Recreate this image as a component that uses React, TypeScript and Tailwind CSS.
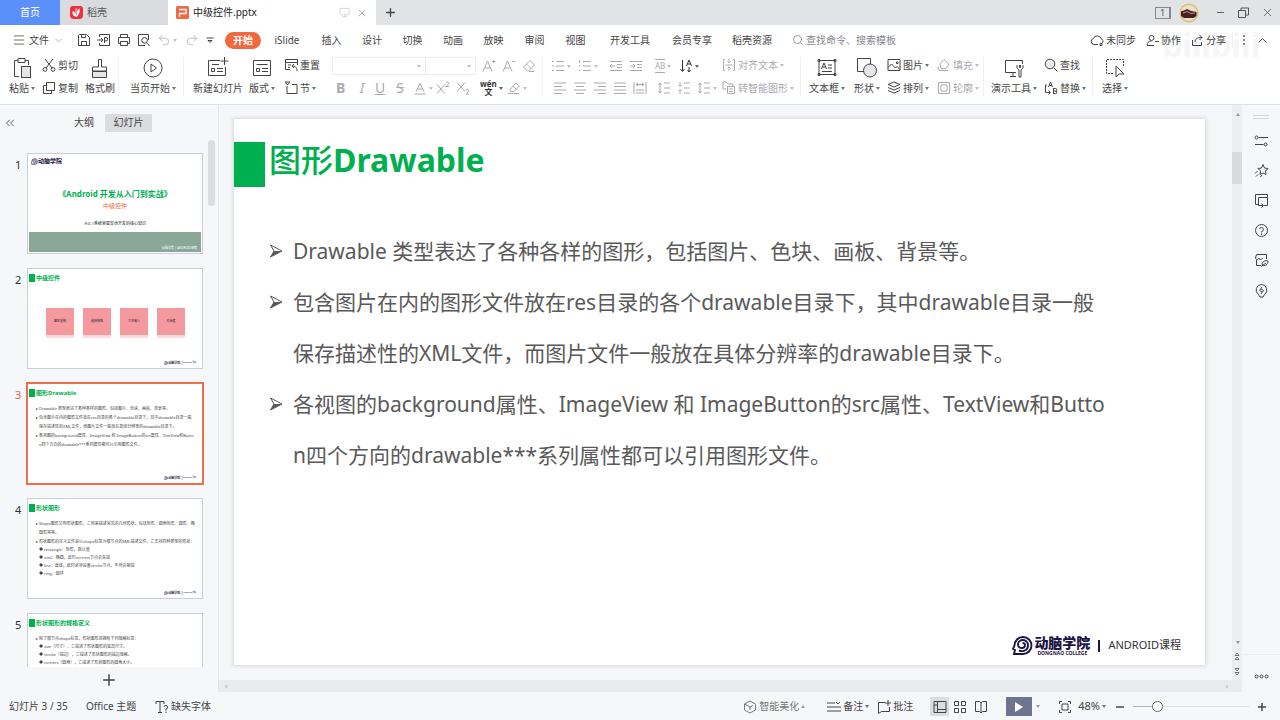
import type { ReactNode } from 'react';
import { ChevronDown, ChevronUp, ChevronsLeft, Menu, Minus, Monitor, Plus, Search, Undo2, Redo2, X } from 'lucide-react';

interface IconProps {
  d: string;
  size?: number;
  className?: string;
  fill?: string;
  children?: ReactNode;
}

/**
 * 线条图标，画布大小与显示大小一致
 */
function Icon({ d, size = 16, className = '', fill = 'none', children }: IconProps) {
  return (
    <svg
      width={size}
      height={size}
      viewBox={`0 0 ${size} ${size}`}
      fill={fill}
      stroke="currentColor"
      strokeWidth="1"
      className={`shrink-0 ${className}`}
      aria-hidden="true"
    >
      {children}
      <path d={d} />
    </svg>
  );
}

/**
 * 下拉小三角
 */
function Caret({ up = false }: { up?: boolean }) {
  return (
    <svg width="4" height="3" viewBox="0 0 4 3" className="ml-0.5 shrink-0 opacity-75" aria-hidden="true">
      <path d={up ? 'M0 3h4L2 0z' : 'M0 0h4L2 3z'} fill="currentColor" />
    </svg>
  );
}

interface ToolProps {
  label: string;
  className?: string;
  caret?: boolean;
  caretUp?: boolean;
  children: ReactNode;
}

/**
 * 大按钮：图标在上，文字在下
 */
function BigTool({ label, className = '', caret, children }: ToolProps) {
  return (
    <button className={`flex shrink-0 flex-col items-center justify-between ${className}`}>
      {children}
      <span className="flex items-center whitespace-nowrap leading-4">
        {label}
        {caret && <Caret />}
      </span>
    </button>
  );
}

/**
 * 小按钮：图标在左，文字在右
 */
function SmallTool({ label, className = '', caret, caretUp, children }: ToolProps) {
  return (
    <button className={`flex h-4 shrink-0 items-center gap-0.5 whitespace-nowrap ${className}`}>
      {children}
      <span className="flex items-center">
        {label}
        {caret && <Caret up={caretUp} />}
      </span>
    </button>
  );
}

/**
 * 只有图标的按钮
 */
function IconTool({ label, className = 'w-5', caret, children }: ToolProps) {
  return (
    <button aria-label={label} className={`flex h-4 shrink-0 items-center ${className}`}>
      {children}
      {caret && <Caret />}
    </button>
  );
}

function Divider({ className = 'h-10' }: { className?: string }) {
  return <div className={`w-px shrink-0 bg-[#f0f0f3] ${className}`} />;
}

const menus = [
  { name: 'iSlide', width: 'w-12' },
  { name: '插入', width: 'w-[41px]' },
  { name: '设计', width: 'w-10' },
  { name: '切换', width: 'w-[41px]' },
  { name: '动画', width: 'w-10' },
  { name: '放映', width: 'w-[41px]' },
  { name: '审阅', width: 'w-[41px]' },
  { name: '视图', width: 'w-[41px]' },
  { name: '开发工具', width: 'w-17' },
  { name: '会员专享', width: 'w-14' },
  { name: '稻壳资源', width: 'w-16' },
];

function TitleBar() {
  return (
    <header className="flex h-[25px] shrink-0 items-center bg-[#e2e3e5]">
      <button className="h-full w-15 bg-[#5b8ff9] text-white">首页</button>
      <button className="flex h-full w-[108px] items-center gap-1 bg-[#dadbdf] pl-[10px] text-[#555]">
        <svg width="13" height="13" viewBox="0 0 14 14" aria-hidden="true">
          <path d="M2 0h10l2 2v8a4 4 0 0 1-4 4H4a4 4 0 0 1-4-4V2z" fill="#ee2f3d" />
          <path d="M7 12C3 11 2 8 3 5.500c2 1 3 2.500 4 4.500C7 7 8 4 10 2.500c1 3 .5 6-3 9.500z" fill="#fff" />
          <path d="M6.500 2.500v5" stroke="#fff" />
        </svg>
        稻壳
      </button>
      <div className="flex h-full w-52 items-center bg-white pl-2 text-[#222]">
        <svg width="13" height="13" viewBox="0 0 13 13" className="mr-1" aria-hidden="true">
          <rect width="13" height="13" rx="1.500" fill="#ee6a43" />
          <path d="M3 3.500h7v4H3.500V11" fill="none" stroke="#fff" strokeWidth="1.300" />
        </svg>
        <span className="flex-1 whitespace-nowrap">中级控件.pptx</span>
        <Monitor size={11} strokeWidth={1.5} className="text-[#c4c5c8]" />
        <button aria-label="关闭标签" className="mr-2 ml-1.5">
          <X size={12} strokeWidth={1.5} className="text-[#999]" />
        </button>
      </div>
      <button aria-label="新建标签" className="ml-2">
        <Plus size={13} strokeWidth={2.5} className="text-[#444]" />
      </button>
      <div className="ml-auto flex items-center text-[#555]">
        <span className="flex h-3 w-4 items-center justify-center border border-r-2 border-[#7e8a97] text-[9px] leading-3">1</span>
        <svg width="20" height="20" viewBox="0 0 20 20" className="ml-2" aria-hidden="true">
          <circle cx="10" cy="10" r="9.500" fill="#d9bd7a" />
          <circle cx="10" cy="10" r="8" fill="#eadfcb" />
          <path d="M2 8.500l4-1.500 2-1 4 2 5.500 1v4l-3 2H5l-3-2z" fill="#4a1c22" />
          <path d="M4 10l4-1.500 4 2 4-.5" stroke="#b89b8a" fill="none" />
        </svg>
        <button aria-label="最小化" className="ml-4">
          <Minus size={11} strokeWidth={2} />
        </button>
        <button aria-label="还原" className="ml-3">
          <Icon size={11} d="M.5 3.500h7v7h-7zM3 3.500V1h7.500v7h-3" />
        </button>
        <button aria-label="关闭" className="mr-1.5 ml-3">
          <X size={13} strokeWidth={1.5} />
        </button>
      </div>
    </header>
  );
}

function MenuBar() {
  return (
    <nav className="relative flex h-[30px] shrink-0 items-center bg-white text-[#444]">
      <span className="absolute top-1 right-5 text-[32px] leading-8 font-bold text-[#f6f6f8]" aria-hidden="true">bilibili</span>
      <button className="relative flex w-[72px] items-center pl-3">
        <Menu size={14} strokeWidth={1.3} />
        <span className="ml-[3px]">文件</span>
        <ChevronDown size={11} strokeWidth={1.3} className="ml-1 text-[#888]" />
      </button>
      <Divider className="h-4" />
      <div className="flex items-center gap-1 pl-1">
        <IconTool label="保存" className="w-4">
          <Icon size={14} d="M1.500 12.500v-10l1-1h7l3 3v8zM4.500 1.500v3h4v-2M4.500 12.500v-4h5v4" />
        </IconTool>
        <IconTool label="输出为PDF" className="w-4">
          <Icon size={14} d="M2.500 4V1.500h10v11h-10V10M0 7h6M4 5l2 2-2 2M7.500 10V4.500h1.500a1.700 1.700 0 0 1 0 3.400H7.500" />
        </IconTool>
        <IconTool label="打印" className="w-4">
          <Icon size={14} d="M3.500 4.500v-3h7v3M3.500 10.500h-2v-6h11v6h-2M3.500 8.500h7v4h-7z" />
        </IconTool>
        <IconTool label="打印预览" className="w-4">
          <Icon size={14} d="M8 12.500H1.500v-11h10V7M9.500 9.500l3 3.500M7.500 4.500a2.800 2.800 0 1 0 .1 5.600 2.800 2.800 0 0 0-.1-5.600z" />
        </IconTool>
        <IconTool label="撤销" className="w-6 text-[#b5b5b9]" caret>
          <Undo2 size={14} strokeWidth={1.5} />
        </IconTool>
        <IconTool label="恢复" className="w-4 text-[#b5b5b9]">
          <Redo2 size={14} strokeWidth={1.5} />
        </IconTool>
        <IconTool label="更多快捷按钮" className="w-3">
          <Icon size={10} d="M1.500 3h7M3 5.500h4L5 7.500z" />
        </IconTool>
      </div>
      <button className="ml-2 h-[17px] w-9 rounded-full bg-[#f2693f] font-bold text-white">开始</button>
      <div className="ml-0.5 flex shrink-0">
        {menus.map((m) => (
          <button key={m.name} className={`shrink-0 text-center whitespace-nowrap ${m.width}`}>
            {m.name}
          </button>
        ))}
      </div>
      <label className="relative ml-2 flex items-center gap-0.5 text-[#777]">
        <Search size={12} strokeWidth={1.5} />
        <input aria-label="查找命令" className="w-24 bg-transparent outline-none placeholder:text-[#85858d]" placeholder="查找命令、搜索模板" />
      </label>
      <div className="relative ml-auto flex items-center">
        <SmallTool label="未同步" className="mr-2.5">
          <Icon size={14} d="M8 11.500H4a3 3 0 0 1-.6-5.900 4 4 0 0 1 7.600 0A3 3 0 0 1 12.500 10M10 10.500h2v2h-2z" />
        </SmallTool>
        <SmallTool label="协作" className="mr-2.5">
          <Icon size={13} d="M1 11.500c0-3 2-4.500 4.500-4.500M1 11.500h7M9 7.500h4M5.500 1.500a2.400 2.400 0 1 0 .1 4.900 2.400 2.400 0 0 0-.1-4.900z" />
        </SmallTool>
        <SmallTool label="分享" className="mr-1.5">
          <Icon size={13} d="M1.500 6v5.500h9V8M4 8c0-3 2-4.500 7-4.500M8.500 1l2.500 2.500L8.500 6" />
        </SmallTool>
        <Divider className="h-4" />
        <button aria-label="更多" className="mx-2.5 flex flex-col gap-0.5">
          <i className="size-0.5 bg-[#888]" />
          <i className="size-0.5 bg-[#888]" />
          <i className="size-0.5 bg-[#888]" />
        </button>
        <button aria-label="收起功能区" className="mr-2.5">
          <ChevronUp size={15} strokeWidth={1.5} />
        </button>
      </div>
    </nav>
  );
}

function FontTools() {
  return (
    <div className="flex w-[210px] shrink-0 flex-col justify-between text-[#aaaab0]">
      <div className="flex h-[18px] items-center">
        <label className="flex h-full w-24 items-center border border-[#ececf0] pr-1">
          <select aria-label="字体" className="w-full appearance-none outline-none" />
          <Caret />
        </label>
        <label className="-ml-px flex h-full w-[52px] items-center border border-[#ececf0] pr-1">
          <select aria-label="字号" className="w-full appearance-none outline-none" />
          <Caret />
        </label>
        <IconTool label="增大字号" className="ml-1.5 w-5">
          <Icon size={14} d="M1 12.500 5.500 2 10 12.500M2.500 9h6M10 2.500h3.500M11.700 1v3" />
        </IconTool>
        <IconTool label="减小字号">
          <Icon size={14} d="M1 12.500 5.500 2 10 12.500M2.500 9h6M10 2.500h3.500" />
        </IconTool>
        <IconTool label="清除格式">
          <Icon size={14} d="M1.500 8 8 1.500 12.500 6 6.500 12h-1zM4.500 5 9 9.500M7 12.500h5" />
        </IconTool>
      </div>
      <div className="flex h-4 items-center pl-0.5">
        <button className="w-5 pl-0.5 text-left text-[14px] leading-4 font-bold">B</button>
        <button className="w-4 text-center text-[14px] leading-4 italic">I</button>
        <button className="w-5 text-center text-[14px] leading-4 underline">U</button>
        <button className="w-5 text-center text-[14px] leading-4 line-through">S</button>
        <IconTool label="字体颜色" className="w-[26px] pl-1" caret>
          <Icon size={13} d="M2 9.500 6 1.500l4 8M3.500 7h5M.5 12h11" />
        </IconTool>
        <IconTool label="上标">
          <Icon size={14} d="M1 3.500l8 9M9 3.500l-8 9M10 1.500c2-1.500 4 0 2 2l-2 2h3" />
        </IconTool>
        <IconTool label="下标">
          <Icon size={14} d="M1 1.500l8 9M9 1.500l-8 9M10 9c2-1.500 4 0 2 2l-2 2h3" />
        </IconTool>
        <IconTool label="拼音指南" className="ml-1 w-[27px] text-[#333]" caret>
          <span className="text-center text-[8px] leading-2 font-bold">
            wén
            <br />文
          </span>
        </IconTool>
        <IconTool label="突出显示" caret>
          <Icon size={14} d="M3 8.500 9 2l3.500 3L7 10.500H3.500zM1 12.500h11M6 5l3.500 3.500" />
        </IconTool>
      </div>
    </div>
  );
}

function ParagraphTools() {
  return (
    <div className="flex w-[171px] shrink-0 flex-col justify-between text-[#aaaab0]">
      <div className="flex h-[18px] items-center">
        <IconTool label="项目符号" className="w-[27px]" caret>
          <Icon size={14} d="M1 2.500h2M1 7h2M1 11.500h2M5 2.500h8M5 7h8M5 11.500h8" />
        </IconTool>
        <IconTool label="编号" className="w-[27px]" caret>
          <Icon size={14} d="M1.500 1v3M1 7h1.500M1 11.500h1.500M5 2.500h8M5 7h8M5 11.500h8" />
        </IconTool>
        <IconTool label="减少缩进" className="ml-1 w-5">
          <Icon size={14} d="M1 2.500h12M8 5.500h5M8 8.500h5M1 11.500h12M6 7H1M3 5 1 7l2 2" />
        </IconTool>
        <IconTool label="增加缩进">
          <Icon size={14} d="M1 2.500h12M8 5.500h5M8 8.500h5M1 11.500h12M1 7h5M4 5l2 2-2 2" />
        </IconTool>
        <button className="ml-1.5 flex w-6 items-center text-[8px] leading-3">
          <span className="border-y border-[#aaaab0]">AB</span>
          <Caret />
        </button>
        <button aria-label="文字方向" className="flex items-center text-[#333]">
          <Icon size={14} d="M3.500 1v11M1.500 10l2 2.500 2-2.500M7.500 7 10 1l2.500 6M8.500 5h3M10 8v4.500M8.500 11l1.500 2 1.500-2" />
          <Caret />
        </button>
      </div>
      <div className="flex h-4 items-center pl-0.5">
        <IconTool label="左对齐">
          <Icon size={14} d="M1 2h12M1 5.500h8M1 9h12M1 12.500h8" />
        </IconTool>
        <IconTool label="居中对齐">
          <Icon size={14} d="M1 2h12M3 5.500h8M1 9h12M3 12.500h8" />
        </IconTool>
        <IconTool label="右对齐">
          <Icon size={14} d="M1 2h12M5 5.500h8M1 9h12M5 12.500h8" />
        </IconTool>
        <IconTool label="两端对齐">
          <Icon size={14} d="M1 2h12M1 5.500h12M1 9h12M1 12.500h12" />
        </IconTool>
        <IconTool label="分散对齐">
          <Icon size={14} d="M1 1v12M13 1v12M3 3.500h8M3 9h8M3 12h8M5 2 3 3.500 5 5M9 2l2 1.500L9 5" />
        </IconTool>
        <IconTool label="段前间距" className="ml-1 w-5">
          <Icon size={14} d="M3 2v10M1.500 4 3 2l1.500 2M1.500 10 3 12l1.500-2M7 2h6M7 7h6M7 12h6" />
        </IconTool>
        <IconTool label="段后间距">
          <Icon size={14} d="M3 1v4M1.500 4 3 5.500 4.500 4M3 13V9M1.500 10 3 8.500 4.500 10M7 2h6M7 7h6M7 12h6" />
        </IconTool>
        <IconTool label="行距" caret>
          <Icon size={14} d="M3 2v10M1.500 4 3 2l1.500 2M1.500 10 3 12l1.500-2M7 2h6M7 7h6M7 12h6" />
        </IconTool>
      </div>
    </div>
  );
}

function Ribbon() {
  return (
    <div className="h-[50px] shrink-0 border-b border-[#dfe0e4] bg-white pt-0.5 text-[#444]">
      <div className="flex h-[39px] w-full items-stretch">
        <BigTool label="粘贴" className="ml-1.5 w-8" caret>
          <Icon size={22} d="M8 19.500H3.500v-16H7M14 3.500h3.500V8M7 1.500h7v4H7z">
            <rect x="10.500" y="9.500" width="9" height="11" fill="#e4e5e8" />
          </Icon>
        </BigTool>
        <div className="ml-1 flex w-10 flex-col justify-between">
          <SmallTool label="剪切">
            <Icon size={14} d="M3 1l7 9M11 1l-7 9M3 9.500a1.900 1.900 0 1 0 .1 3.800A1.900 1.900 0 0 0 3 9.500zM11 9.500a1.900 1.900 0 1 0 .1 3.800 1.900 1.900 0 0 0-.1-3.800z" />
          </SmallTool>
          <SmallTool label="复制">
            <Icon size={14} d="M4.500 1.500h8v8h-8zM4.500 4.500h-3v8h8v-3" />
          </SmallTool>
        </div>
        <BigTool label="格式刷" className="w-9">
          <Icon size={22} d="M9.500 10V2.500h3V10h5v4h-14v-4z">
            <path d="M3.500 14.500h14v6h-14z" fill="#e4e5e8" />
          </Icon>
        </BigTool>
        <Divider />
        <BigTool label="当页开始" className="ml-1 w-15" caret>
          <Icon size={22} d="M11 2a9 9 0 1 0 .1 18A9 9 0 0 0 11 2zM9 7v8l5.500-4z" />
        </BigTool>
        <Divider />
        <BigTool label="新建幻灯片" className="ml-1 w-15">
          <Icon size={22} d="M13 3.500H1.500v15h17V10M17.500 0v8M13.500 4h8M5 7.500h7M4.500 11.500h3v3h-3zM10 11.500h6M10 14.500h6" />
        </BigTool>
        <BigTool label="版式" className="w-7" caret>
          <Icon size={22} d="M2.500 3.500h17v15h-17zM5.500 7.500h11M5.500 11.500h3v3h-3zM11 11.500h6M11 14.500h6" />
        </BigTool>
        <div className="ml-2 flex w-12 flex-col justify-between">
          <SmallTool label="重置">
            <Icon size={14} d="M6 11.500H1.500v-10h12V7M1.500 4.500h12M4 7h3M13 13c0-4-2-5-5-5M10 6 8 8l2 2M4 9.500h2" />
          </SmallTool>
          <SmallTool label="节" caret>
            <Icon size={14} d="M1 1h5L3.500 4zM3 5v7.500h10v-9H8" />
          </SmallTool>
        </div>
        <FontTools />
        <Divider />
        <div className="w-2 shrink-0" />
        <ParagraphTools />
        <div className="flex w-[78px] flex-col justify-between text-[#aaaab0]">
          <SmallTool label="对齐文本" caret>
            <Icon size={14} d="M3 1.500H1.500v11H3M11 1.500h1.500v11H11M3.500 7h7M7 1v4M7 13V9M5.500 3.500 7 5l1.500-1.500M5.500 10.500 7 9l1.500 1.500" />
          </SmallTool>
          <SmallTool label="转智能图形" caret>
            <Icon size={14} d="M1 1v7h3M1 1h3l2 2h5v2M5.500 5.500h7v7h-7zM7 8h4M7 10.500h4" />
          </SmallTool>
        </div>
        <Divider />
        <BigTool label="文本框" className="ml-1 w-11" caret>
          <Icon size={22} d="M3 3.500h16v14H3zM5.500 12 8 6l2.500 6M6.500 10h3M12 8h4M12 11h4M6 14.500h10M2 2.500h2v2H2zM18 2.500h2v2h-2zM2 16.500h2v2H2zM18 16.500h2v2h-2z" />
        </BigTool>
        <BigTool label="形状" className="w-9" caret>
          <Icon size={22} d="M8 14.500H1.500v-13h13V7">
            <circle cx="14" cy="13.500" r="6.500" fill="#e4e5e8" />
          </Icon>
        </BigTool>
        <div className="ml-0.5 flex w-12 flex-col justify-between">
          <SmallTool label="图片" caret>
            <Icon size={14} d="M1 1.500h12v11H1zM1 9.500l3.500-3.500 4 4 1.500-1.500 3 3M9.500 4h1.500v1.500H9.500z" />
          </SmallTool>
          <SmallTool label="排列" caret>
            <Icon size={14} d="M7 1l6 2.500L7 6 1 3.500zM1 6.500 7 9l6-2.500M1 9.500 7 12l6-2.500" />
          </SmallTool>
        </div>
        <div className="ml-0.5 flex w-[46px] flex-col justify-between text-[#aaaab0]">
          <SmallTool label="填充" caret>
            <Icon size={14} d="M3 6l4-4.500L12 6l-3 4.500H4zM1 8.500c0 2 0 3.500 2 4h8" />
          </SmallTool>
          <SmallTool label="轮廓" caret>
            <Icon size={14} d="M1.500 1.500h11v11h-11zM4 4h6v6H4z" />
          </SmallTool>
        </div>
        <Divider />
        <BigTool label="演示工具" className="ml-0.5 w-14" caret>
          <Icon size={22} d="M13 15.500H2.500v-12h17V7M7 19.500h6M10 15.500v4M14 8v3l2 2v7h2v-7l2-2V8M16.500 8v2.500h1V8" />
        </BigTool>
        <div className="ml-0.5 flex w-12 flex-col justify-between">
          <SmallTool label="查找">
            <Icon size={14} d="M10 10l3.500 3.500">
              <circle cx="6" cy="6" r="4.800" fill="#ececef" />
            </Icon>
          </SmallTool>
          <SmallTool label="替换" caret>
            <Icon size={14} d="M3 4H1.500v7.500H6M4.500 9.500l2 2-2 2M4.500 6 6.500 1l2 5M5.300 4.500h2.500M9.500 7v6M9.500 7.500h2a1.200 1.200 0 0 1 0 2.500h-2M11.500 10a1.300 1.300 0 0 1 0 2.700h-2" />
          </SmallTool>
        </div>
        <Divider />
        <BigTool label="选择" className="ml-1 w-9" caret>
          <svg width="22" height="22" viewBox="0 0 22 22" fill="none" stroke="currentColor" aria-hidden="true">
            <path d="M9 16.500H2.500v-14h17V10" strokeDasharray="2 1" />
            <path d="M12 9v11l3-3h5z" fill="#fff" />
          </svg>
        </BigTool>
      </div>
    </div>
  );
}

const blocks = ['图形定制', '选择按钮', '文本输入', '对话框'];

/**
 * 学院标志
 */
function Logo({ size }: { size: number }) {
  return (
    <svg width={size} height={size} viewBox="0 0 21 21" fill="none" stroke="currentColor" strokeWidth="1.900" className="shrink-0" aria-hidden="true">
      <path d="M2 19h9a8.500 8.500 0 1 0-8.500-8.500L1 14l2 1z" />
      <path d="M7 15.500c5 2 9-1 9-5s-3-5.500-5.500-5.500S6 7 6 9.500 8 13 10 13s3-1.500 3-3-1-2-2.500-2" />
    </svg>
  );
}

/**
 * 缩略图标题
 */
function ThumbTitle({ text }: { text: string }) {
  return (
    <div className="mt-[5px] ml-px flex h-2 items-center gap-px text-[6px] leading-2 font-bold text-[#00b050]">
      <i className="h-2 w-[6px] bg-[#00b050]" />
      {text}
    </div>
  );
}

function ThumbFooter() {
  return (
    <div className="absolute right-1.5 bottom-0.5 flex items-center text-[3px] leading-[6px] font-bold whitespace-nowrap text-[#1b1546]">
      <Logo size={4} />
      动脑学院 | <span className="text-[2px] font-normal">ANDROID课程</span>
    </div>
  );
}

function ThumbLines({ lines, sub = false }: { lines: string[]; sub?: boolean }) {
  return (
    <div className={`text-[4px] whitespace-pre text-[#444] ${sub ? 'ml-[11px] leading-2' : 'ml-2 leading-[9px]'}`}>
      {lines.map((line) => (
        <p key={line}>{line}</p>
      ))}
    </div>
  );
}

const slides: { id: number; content: ReactNode }[] = [
  {
    id: 1,
    content: (
      <span className="flex h-full flex-col text-center">
        <span className="mt-[3px] ml-[3px] flex items-center text-[6px] leading-2 font-bold text-[#1b1546]">
          <Logo size={7} />
          动脑学院
        </span>
        <span className="mt-[23px] text-[8px] leading-3 font-bold text-[#00b050]">《Android 开发从入门到实战》</span>
        <span className="mt-0.5 text-[6px] leading-2 text-[#f2693f]">中级控件</span>
        <span className="mt-2.5 text-[4px] leading-2 text-[#222]">从0-1系统掌握安卓开发的核心知识</span>
        <span className="mx-px mt-auto mb-px flex h-5 items-end justify-end bg-[#8aa897] pr-1 pb-px text-[3px] leading-[6px] text-white">
          动脑学院 | ANDROID课程
        </span>
      </span>
    ),
  },
  {
    id: 2,
    content: (
      <>
        <ThumbTitle text="中级控件" />
        <div className="mt-[26px] ml-[18px] flex gap-[9px]">
          {blocks.map((b) => (
            <div key={b} className="flex h-[30px] w-7 items-center justify-center border-b-3 border-[#fbdcde] bg-[#f49a9f] text-[3px] text-[#222]">
              {b}
            </div>
          ))}
        </div>
        <ThumbFooter />
      </>
    ),
  },
  {
    id: 3,
    content: (
      <>
        <ThumbTitle text="图形Drawable" />
        <div className="h-[7px]" />
        <ThumbLines
          lines={[
            '▸ Drawable 类型表达了各种各样的图形，包括图片、色块、画板、背景等。',
            '▸ 包含图片在内的图形文件放在res目录的各个drawable目录下，其中drawable目录一般',
            '   保存描述性的XML文件，而图片文件一般放在具体分辨率的drawable目录下。',
            '▸ 各视图的background属性、ImageView 和 ImageButton的src属性、TextView和Butto',
            '   n四个方向的drawable***系列属性都可以引用图形文件。',
          ]}
        />
        <ThumbFooter />
      </>
    ),
  },
  {
    id: 4,
    content: (
      <>
        <ThumbTitle text="形状图形" />
        <div className="h-[7px]" />
        <ThumbLines
          lines={[
            '▸ Shape图形又称形状图形，它用来描述常见的几何形状，包括矩形、圆角矩形、圆形、椭',
            '   圆形等等。',
            '▸ 形状图形的定义文件是以shape标签为根节点的XML描述文件，它支持四种类型的形状：',
          ]}
        />
        <ThumbLines
          sub
          lines={[
            '◆ rectangle：矩形，默认值',
            '◆ oval：椭圆，此时corners节点会失效',
            '◆ line：直线，此时必须设置stroke节点，不然会报错',
            '◆ ring：圆环',
          ]}
        />
        <ThumbFooter />
      </>
    ),
  },
  {
    id: 5,
    content: (
      <>
        <ThumbTitle text="形状图形的规格定义" />
        <div className="h-[7px]" />
        <ThumbLines lines={['▸ 除了根节点shape标签，形状图形还拥有下列规格标签：']} />
        <ThumbLines
          sub
          lines={[
            '◆ size（尺寸），它描述了形状图形的宽高尺寸。',
            '◆ stroke（描边），它描述了形状图形的描边规格。',
            '◆ corners（圆角），它描述了形状图形的圆角大小。',
          ]}
        />
      </>
    ),
  },
];

function SlidePanel() {
  return (
    <aside className="flex w-[219px] shrink-0 flex-col border-r border-[#e3e4e8] bg-[#f6f7f9]">
      <div className="flex h-[35px] shrink-0 items-center text-[#444]">
        <button aria-label="收起面板" className="ml-[3px]">
          <ChevronsLeft size={14} strokeWidth={1.5} />
        </button>
        <button className="ml-[57px] w-5 whitespace-nowrap">大纲</button>
        <button className="ml-[11px] h-[18px] w-[47px] bg-[#dadce0]">幻灯片</button>
      </div>
      <div className="flex min-h-0 flex-1">
        <div className="flex min-h-0 flex-1 flex-col gap-[14px] overflow-hidden pt-[13px]">
          {slides.map((s) => {
            const active = s.id === 3;
            return (
              <div key={s.id} className="flex shrink-0">
                <span className={`w-[27px] pt-1 pl-[15px] text-[11px] leading-4 ${active ? 'text-[#e8663f]' : 'text-[#333]'}`}>{s.id}</span>
                <button
                  className={`relative h-[101px] w-44 overflow-hidden border bg-white text-left ${
                    active ? 'border-[#ef6f4b] ring ring-[#ef6f4b]' : 'border-[#c9cfda]'
                  }`}
                >
                  <span className="flex h-full flex-col">{s.content}</span>
                </button>
              </div>
            );
          })}
        </div>
        <div className="mr-[3px] h-[66px] w-[7px] shrink-0 rounded-full bg-[#dcdde1]" />
      </div>
      <button aria-label="新建幻灯片" className="flex h-[25px] shrink-0 items-center justify-center">
        <Plus size={18} strokeWidth={2} className="text-[#444]" />
      </button>
    </aside>
  );
}

const paragraphs = [
  ['Drawable 类型表达了各种各样的图形，包括图片、色块、画板、背景等。'],
  [
    '包含图片在内的图形文件放在res目录的各个drawable目录下，其中drawable目录一般',
    '保存描述性的XML文件，而图片文件一般放在具体分辨率的drawable目录下。',
  ],
  [
    '各视图的background属性、ImageView 和 ImageButton的src属性、TextView和Butto',
    'n四个方向的drawable***系列属性都可以引用图形文件。',
  ],
];

function SlideStage() {
  return (
    <main className="flex min-w-0 flex-1 flex-col bg-[#f5f6f8]">
      <div className="flex min-h-0 flex-1">
        <div className="min-w-0 flex-1 pt-[14px] pr-[27px] pl-[15px]">
          <section className="flex aspect-video flex-col bg-white shadow-[0_0_4px_1px_#d5d6da]">
            <div className="mt-[23px] flex items-start">
              <i className="h-[45px] w-[31px] bg-[#00b050]" />
              <h1 className="ml-1 text-[32px] leading-9 font-bold text-[#00b050]">
                <span className="font-medium">图形</span>Drawable
              </h1>
            </div>
            <ul className="mt-[39px] ml-9 text-[21px] leading-[51px] whitespace-nowrap text-[#595959]">
              {paragraphs.map((lines) => (
                <li key={lines[0]} className="flex">
                  <svg width="13" height="14" viewBox="0 0 13 14" className="mt-[18px] mr-[10px] shrink-0" aria-hidden="true">
                    <path d="M.5 1 12 7 .5 13 4 7z" fill="#fff" stroke="#595959" />
                    <path d="M4 7h8L.5 13z" fill="#595959" />
                  </svg>
                  <div>
                    {lines.map((line) => (
                      <p key={line}>{line}</p>
                    ))}
                  </div>
                </li>
              ))}
            </ul>
            <footer className="mt-auto mr-6 mb-[9px] flex items-center justify-end text-[#1b1546]">
              <Logo size={21} />
              <div className="ml-px flex flex-col items-center">
                <span className="text-[14px] leading-4 font-black">动脑学院</span>
                <span className="text-[5px] leading-[5px] font-bold">DONGNAO COLLEGE</span>
              </div>
              <i className="mx-2 h-3 w-0.5 bg-[#1b1546]" />
              <span className="text-[11px] text-[#333]">ANDROID课程</span>
            </footer>
          </section>
        </div>
        <div className="flex w-[10px] shrink-0 flex-col items-center bg-[#eceef1] pt-2 text-[#777]">
          <Caret up />
          <div className="mt-9 h-8 w-full bg-[#d8dade]" />
          <div className="mt-auto flex flex-col items-center gap-2 pb-1">
            <Caret />
            <Icon size={8} d="M2 3.500 4 1l2 2.500zM2 7.500 4 5l2 2.500z" />
            <Icon size={8} d="M2 .5 4 3l2-2.500zM2 4.500 4 7l2-2.500z" />
          </div>
        </div>
      </div>
      <div className="flex h-3 shrink-0 items-center justify-between bg-[#e9ebee] px-1.5 text-[8px] text-[#aaa]">
        <span>‹</span>
        <span className="mr-2">›</span>
      </div>
    </main>
  );
}

const sideTools = [
  { name: '属性', d: 'M4.500 4.500H14M1 11.500h8.500M2.500 3a1.500 1.500 0 1 0 .1 3 1.500 1.500 0 0 0-.1-3zM11.500 10a1.500 1.500 0 1 0 .1 3 1.500 1.500 0 0 0-.1-3z' },
  { name: '动画', d: 'M9 1.500l1.500 3.500 3.500.5-2.500 2.500.5 3.500L9 10l-3 1.500.5-3.500L4 5.500 7.500 5zM3.500 8 1 10.500M4 11.500l-2 2M8 12l-1.500 2' },
  { name: '版式', d: 'M4 11.500H1.500v-10h12V4M8 12.500H4.500v-8h9v8H10M6 12.500h3M7.500 10.500l2 2-2 2' },
  { name: '帮助', d: 'M7.500 1.500a6 6 0 1 0 .1 12 6 6 0 0 0-.1-12zM5.500 6a2 2 0 1 1 2 2.500v1M7.500 10.500v1.500' },
  { name: '资源', d: 'M7 12.500H2.500V7M12.500 6V1.500h-10L1.500 5c0 2 3 2 3.500 0 .5 2 3 2 3.500 0M14 8c-3-1-6 1-6 3.500 3 2.500 6 0 6-3.500zM7 13.500l5-3.500' },
  { name: '灵感', d: 'M7.500 1.500a5.500 5.500 0 0 0-3 10L6 14h3l1.500-2.500a5.500 5.500 0 0 0-3-10zM8 4 5.500 7.500 8 9M7 11l2.500-3.500L7 6' },
];

function SideBar() {
  return (
    <aside className="flex w-[38px] shrink-0 flex-col items-center bg-[#f6f7f9] text-[#444]">
      <div className="mt-2.5 h-1 w-4 border-y border-[#d5d6da]" />
      <div className="mt-[14px] flex flex-col gap-[15px]">
        {sideTools.map((t) => (
          <button key={t.name} aria-label={t.name}>
            <Icon size={15} d={t.d} />
          </button>
        ))}
      </div>
      <div className="mt-auto w-full border-t border-[#eceef1]" />
      <button aria-label="更多" className="mt-[14px] mb-2">
        <Icon size={15} d="M2.500 6a1.500 1.500 0 1 0 .1 3 1.500 1.500 0 0 0-.1-3zM7.500 6a1.500 1.500 0 1 0 .1 3 1.500 1.500 0 0 0-.1-3zM12.500 6a1.500 1.500 0 1 0 .1 3 1.500 1.500 0 0 0-.1-3z" />
      </button>
    </aside>
  );
}

function StatusBar() {
  return (
    <footer className="flex h-7 shrink-0 items-center bg-[#f6f7f9] pt-px pl-[9px] whitespace-nowrap text-[#444]">
      <span className="w-[77px]">幻灯片 3 / 35</span>
      <span className="w-[69px]">Office 主题</span>
      <button className="flex items-center gap-0.5">
        <Icon size={14} d="M1 4V1.500h8V4M5 1.500v11M3 12.500h4M9 7a1.800 1.800 0 1 1 2 2v1.500M11 11.500v1.500" />
        缺失字体
      </button>
      <div className="ml-auto flex items-center">
        <SmallTool label="智能美化" className="mr-[22px] text-[#777]" caret caretUp>
          <Icon size={14} d="M1.500 4 7 1l5.500 3v6L7 13l-5.500-3zM1.500 4 7 7l3-1.500M7 7v3" />
        </SmallTool>
        <SmallTool label="备注" className="mr-2" caret>
          <Icon size={14} d="M0 3h8M0 7h14M0 11h14M9 2l2 2 2-2" />
        </SmallTool>
        <SmallTool label="批注" className="mr-[17px]">
          <Icon size={14} d="M8 2.500H1.500v11l3-2h8V7M11 0v6M8 3h6" />
        </SmallTool>
        <button aria-label="普通视图" className="flex size-[19px] items-center justify-center bg-[#dcdde0]">
          <Icon size={14} d="M1 1.500h12v11H1zM4.500 1.500v11M4.500 9.500H13M1 5h3.500" />
        </button>
        <button aria-label="幻灯片浏览" className="ml-1">
          <Icon size={14} d="M1.500 1.500h4v4h-4zM8.500 1.500h4v4h-4zM1.500 8.500h4v4h-4zM8.500 8.500h4v4h-4z" />
        </button>
        <button aria-label="阅读视图" className="ml-[7px]">
          <Icon size={14} d="M7 3v10M7 3 5.500 1.500h-4v10h4L7 13l1.500-1.500h4v-10h-4z" />
        </button>
        <button aria-label="从当前幻灯片放映" className="ml-[18px] flex h-[19px] w-[26px] items-center justify-center bg-[#6f758e]">
          <svg width="8" height="10" viewBox="0 0 8 10" aria-hidden="true">
            <path d="M0 0l8 5-8 5z" fill="#fff" />
          </svg>
        </button>
        <span className="ml-0.5 text-[#777]">
          <Caret />
        </span>
        <button aria-label="适应窗口" className="ml-[18px]">
          <Icon size={14} d="M1.500 4V1.500H4M10 1.500h2.500V4M12.500 10v2.500H10M4 12.500H1.500V10M4 4h6v6H4z" />
        </button>
        <button className="ml-1.5 flex items-center text-[11px]">
          48%
          <Caret />
        </button>
        <button aria-label="缩小" className="ml-2">
          <Minus size={12} strokeWidth={3} />
        </button>
        <input
          type="range"
          aria-label="缩放"
          defaultValue={18}
          className="mx-[7px] h-3 w-[116px] appearance-none bg-[linear-gradient(90deg,#b5b6bb_20%,#e0e1e5_20%)] bg-[length:100%_1px] bg-center bg-no-repeat [&::-webkit-slider-thumb]:size-[11px] [&::-webkit-slider-thumb]:appearance-none [&::-webkit-slider-thumb]:rounded-full [&::-webkit-slider-thumb]:border [&::-webkit-slider-thumb]:border-[#666] [&::-webkit-slider-thumb]:bg-white"
        />
        <button aria-label="放大" className="mr-3">
          <Plus size={12} strokeWidth={3} />
        </button>
      </div>
    </footer>
  );
}

export default function App() {
  return (
    <div className="flex h-screen flex-col overflow-hidden bg-[#f6f7f9] font-['Noto_Sans','Noto_Sans_CJK_SC',sans-serif] text-[10px]">
      <TitleBar />
      <MenuBar />
      <Ribbon />
      <div className="flex min-h-0 flex-1">
        <SlidePanel />
        <SlideStage />
        <SideBar />
      </div>
      <StatusBar />
    </div>
  );
}
